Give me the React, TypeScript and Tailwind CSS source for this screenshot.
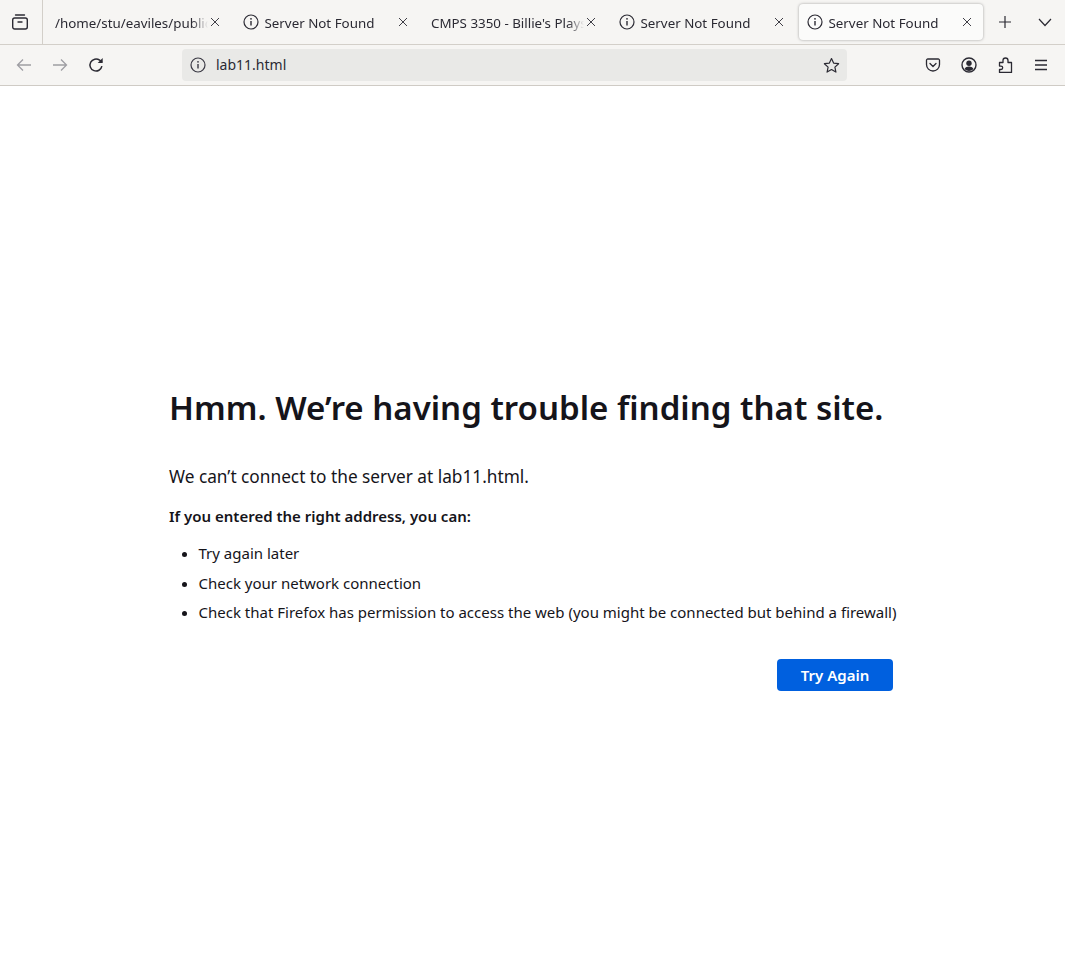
import React from "react";

const InfoIcon = ({ className = "" }: { className?: string }) => (
  <svg className={className} width="16" height="16" viewBox="0 0 16 16" fill="none" stroke="currentColor" strokeWidth="1.2">
    <circle cx="8" cy="8" r="7" />
    <path d="M8 7v4.5" strokeWidth="1.4" />
    <circle cx="8" cy="4.8" r="0.9" fill="currentColor" stroke="none" />
  </svg>
);

const CloseIcon = () => (
  <svg width="16" height="16" viewBox="0 0 16 16" fill="none" stroke="currentColor" strokeWidth="0.9">
    <path d="M4 4l8 8M12 4l-8 8" />
  </svg>
);

const Tab = ({ title, icon = false, active = false }: { title: string; icon?: boolean; active?: boolean }) => (
  <div
    className={
      active
        ? "mx-[2px] flex h-9 w-[184px] items-center rounded bg-[#fbfbfa] pl-2 pr-2 shadow-[0_0_3px_rgba(0,0,0,0.35)]"
        : "mx-[2px] flex h-9 w-[184px] items-center rounded pl-2 pr-2"
    }
  >
    {icon && <InfoIcon className="mr-[5.5px] shrink-0 text-[#2b2a33]" />}
    <span className="min-w-0 flex-1 overflow-hidden whitespace-nowrap pt-[3px] text-[13.35px] text-[#2b2a33] [mask-image:linear-gradient(to_left,transparent,black_16px)]">
      {title}
    </span>
    <span className="-ml-[1px] shrink-0 text-[#2b2a33]">
      <CloseIcon />
    </span>
  </div>
);

export default function App() {
  return (
    <div className="flex min-h-[971px] flex-col bg-white font-['Noto_Sans',sans-serif] text-[#15141a]">
      <div className="flex h-[45px] items-center border-b border-[#d3cfc9] bg-[#f6f5f3]">
        <div className="flex h-full w-[43px] shrink-0 items-center justify-center border-r border-[#d3cfc9] pr-[3px]">
          <svg width="16" height="16" viewBox="0 0 16 16" fill="none" stroke="#2b2a33" strokeWidth="1.4">
            <path d="M3.500 1h9" strokeLinecap="round" />
            <rect x="0.700" y="4" width="14.600" height="11" rx="2" />
            <path d="M6 8h4" strokeLinecap="round" />
          </svg>
        </div>
        <div className="ml-[2px] flex h-full items-center">
          <Tab title="/home/stu/eaviles/public_html/3350/lab11" />
          <Tab title="Server Not Found" icon />
          <Tab title="CMPS 3350 - Billie's Playset and More" />
          <Tab title="Server Not Found" icon />
          <Tab title="Server Not Found" icon active />
        </div>
        <div className="ml-[2px] flex h-full w-9 items-center justify-center">
          <svg width="16" height="16" viewBox="0 0 16 16" fill="none" stroke="#2b2a33" strokeWidth="1.2">
            <path d="M8 2v12M2 8h12" />
          </svg>
        </div>
        <div className="ml-[4px] flex h-full w-9 items-center justify-center pb-[1px]">
          <svg width="16" height="16" viewBox="0 0 16 16" fill="none" stroke="#2b2a33" strokeWidth="1.2">
            <path d="M2 5l6 6.500 6-6.500" />
          </svg>
        </div>
      </div>

      <div className="flex h-[41px] items-center border-b border-[#cfcbc5] bg-[#f6f5f3]">
        <div className="flex w-[182px] shrink-0 items-center pl-[6px]">
          <div className="flex h-9 w-9 items-center justify-center text-[#9f9ea3]">
            <svg width="16" height="16" viewBox="0 0 16 16" fill="none" stroke="currentColor" strokeWidth="1.3">
              <path d="M15 8H1.500M7 2.500L1.500 8 7 13.500" />
            </svg>
          </div>
          <div className="flex h-9 w-9 items-center justify-center text-[#9f9ea3]">
            <svg width="16" height="16" viewBox="0 0 16 16" fill="none" stroke="currentColor" strokeWidth="1.3">
              <path d="M1 8h13.500M9 2.500L14.500 8 9 13.500" />
            </svg>
          </div>
          <div className="flex h-9 w-9 items-center justify-center text-[#2b2a33]">
            <svg width="16" height="16" viewBox="0 0 16 16" fill="none" stroke="currentColor" strokeWidth="1.500">
              <path d="M13.900 9.200A6 6 0 1 1 11.600 3.200L14 5" />
              <path d="M14.700 1v5h-5z" fill="currentColor" stroke="none" />
            </svg>
          </div>
        </div>
        <div className="flex h-8 w-[665px] items-center rounded bg-[#e9e9e7] pl-2 pr-[7px]">
          <InfoIcon className="shrink-0 text-[#3a3944]" />
          <span className="ml-[10px] flex-1 pb-[2px] text-[14px] text-[#2b2a33]">lab11.html</span>
          <svg width="17" height="17" viewBox="0 0 17 17" fill="none" stroke="#2b2a33" strokeWidth="1.200" strokeLinejoin="round">
            <path d="M8.500 1.500l2.100 4.600 5 .6-3.700 3.400 1 5-4.400-2.500-4.400 2.500 1-5L1.400 6.700l5-.6z" />
          </svg>
        </div>
        <div className="ml-[78px] flex items-center gap-[20px] text-[#2b2a33]">
          <svg width="16" height="16" viewBox="0 0 16 16" fill="none" stroke="currentColor" strokeWidth="1.300" strokeLinejoin="round">
            <path d="M2.800 2h10.400a1.300 1.300 0 0 1 1.300 1.300V7.500a6.500 6.500 0 0 1-13 0V3.300A1.300 1.300 0 0 1 2.800 2z" />
            <path d="M5 6.500l3 3 3-3" strokeLinecap="round" />
          </svg>
          <svg width="16" height="16" viewBox="0 0 16 16" fill="none">
            <circle cx="8" cy="8" r="7" stroke="currentColor" strokeWidth="1.400" />
            <circle cx="8" cy="6.200" r="2.700" fill="currentColor" />
            <path d="M3.500 12c1-1.800 2.600-2.500 4.500-2.500s3.500.7 4.500 2.500A6 6 0 0 1 8 14a6 6 0 0 1-4.500-2z" fill="currentColor" />
          </svg>
          <svg width="16" height="16" viewBox="0 0 16 16" fill="none" stroke="currentColor" strokeWidth="1.300" strokeLinejoin="round">
            <path d="M6 5.500V3.500a2.500 2.500 0 0 1 5 0V5.500H14.500V15.500H2.500V12.500H4a1.700 1.700 0 0 0 0-3.400H2.500V5.500z" />
          </svg>
          <svg width="16" height="16" viewBox="0 0 16 16" fill="none" stroke="currentColor" strokeWidth="1.300">
            <path d="M2 3.500h12M2 8h12M2 12.500h12" />
          </svg>
        </div>
      </div>

      <main className="flex flex-col pl-[169px] pt-[299px]">
        <h1 className="text-[33.05px] font-semibold leading-[46px] text-[#15141a]">
          Hmm. We’re having trouble finding that site.
        </h1>
        <p className="mt-[34px] text-[17.250px] leading-[24px]">We can’t connect to the server at lab11.html.</p>
        <p className="mt-[17px] text-[15px] font-semibold leading-[20px]">If you entered the right address, you can:</p>
        <ul className="mt-[17px] flex list-disc flex-col gap-[9.500px] pl-[29.500px] text-[15px] leading-[20px]">
          <li>Try again later</li>
          <li>Check your network connection</li>
          <li>Check that Firefox has permission to access the web (you might be connected but behind a firewall)</li>
        </ul>
        <button className="ml-[608px] mt-[37px] h-8 w-[116px] rounded bg-[#0060df] pt-[1px] text-[15px] font-semibold text-white">
          Try Again
        </button>
      </main>
    </div>
  );
}
